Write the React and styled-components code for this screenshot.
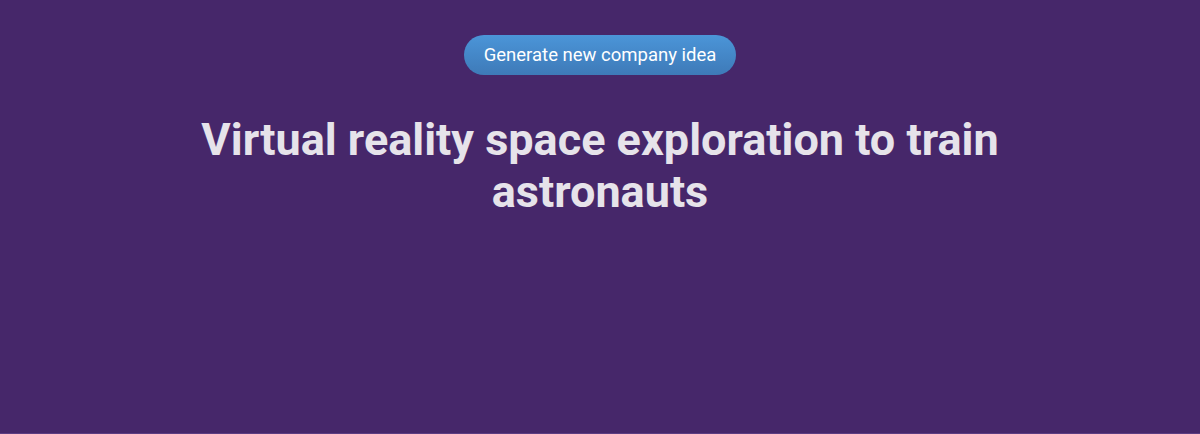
import React from "react";
import styled, { createGlobalStyle } from "styled-components";

const Global = createGlobalStyle`
  html, body { margin: 0; padding: 0; background: #5b3d82; }
  body { font-family: Roboto, "Noto Sans", sans-serif; }
`;

const Page = styled.main`
  height: 433px;
  background: #46276a;
  display: flex;
  flex-direction: column;
  align-items: center;
  padding-top: 35px;
  box-sizing: border-box;
`;

const Button = styled.button`
  height: 40px;
  padding: 0 20px;
  border: none;
  border-radius: 20px;
  background: linear-gradient(180deg, #4b95d8 0%, #3e7ab8 100%);
  color: #ffffff;
  font-family: Roboto, sans-serif;
  font-size: 18.5px;
  cursor: pointer;
`;

const Title = styled.h1`
  margin: 39px 0 0;
  max-width: 820px;
  text-align: center;
  color: #e6e3ea;
  font-family: Roboto, sans-serif;
  font-weight: 700;
  font-size: 45px;
  line-height: 1.15;
`;

export default function App() {
  return (
    <>
      <Global />
      <Page>
        <Button>Generate new company idea</Button>
        <Title>Virtual reality space exploration to train astronauts</Title>
      </Page>
    </>
  );
}
